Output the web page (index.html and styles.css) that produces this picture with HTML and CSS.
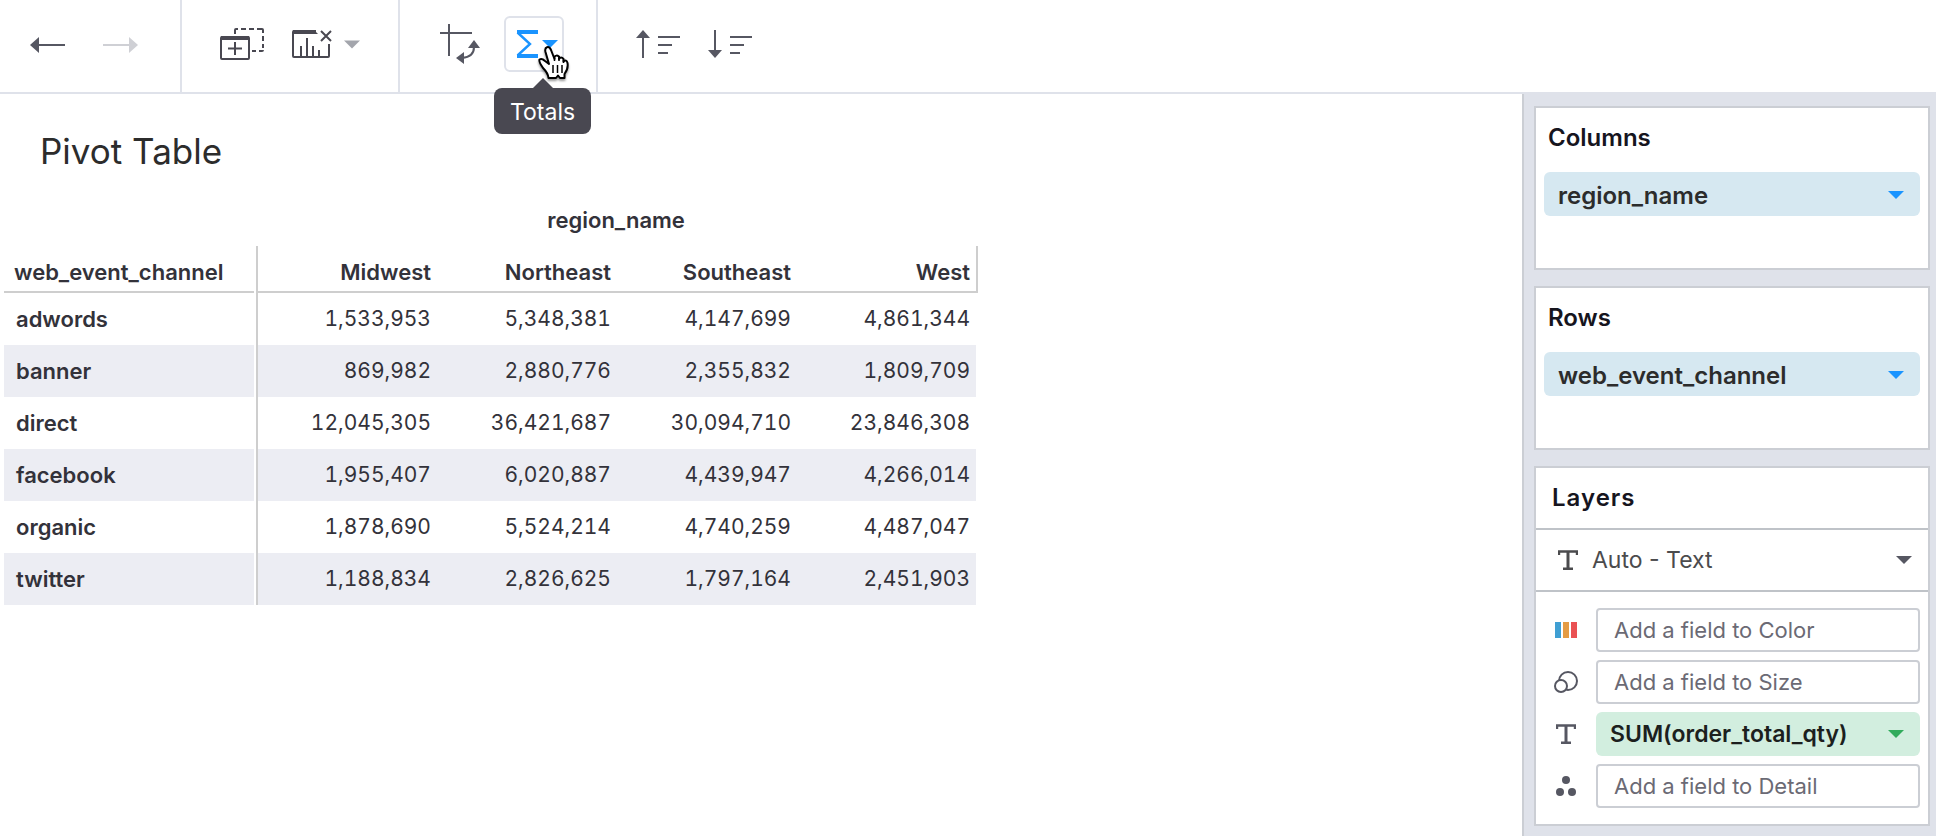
FILE: index.html
```
<!DOCTYPE html>
<html lang="en">
<head>
<meta charset="utf-8">
<title>Pivot Table</title>
<link rel="stylesheet" href="styles.css">
</head>
<body>
<svg class="defs" width="0" height="0" aria-hidden="true">
  <symbol id="caret" viewBox="0 0 16 8"><path d="M0 0H16L8 8Z" fill="currentColor"/></symbol>
  <symbol id="text-mark" viewBox="0 0 20 20"><path d="M1 5V1.500H19V5M5 18.800H15" fill="none" stroke="currentColor" stroke-width="2.400"/><path d="M10 1.500V18.500" stroke="currentColor" stroke-width="3"/></symbol>
</svg>
<div class="app">
  <header class="toolbar">
    <div class="group history">
      <button class="tool" aria-label="Undo"><svg width="36" height="18" viewBox="0 0 36 18"><path d="M0 9L9 1V17Z" fill="currentColor"/><path d="M8 9H35" stroke="currentColor" stroke-width="2"/></svg></button>
      <button class="tool faded" aria-label="Redo"><svg width="36" height="18" viewBox="0 0 36 18"><path d="M36 9L27 1V17Z" fill="currentColor"/><path d="M1 9H28" stroke="currentColor" stroke-width="2"/></svg></button>
    </div>
    <div class="group sheets">
      <button class="tool dark" aria-label="Duplicate"><svg width="44" height="32" viewBox="0 0 44 32" fill="none" stroke="currentColor" stroke-width="2"><rect x="1" y="9" width="28" height="22" rx="1"/><path d="M1 10H29" stroke-width="4"/><path d="M15 14V27M8 20.500H22"/><path d="M15 6V2Q15 1 16 1H18M21 1H26M29 1H34M37 1H42Q43 1 43 2V5M43 8V13M43 16V20M43 22Q43 23 42 23H39M36 23H32"/></svg></button>
      <button class="tool dark with-caret" aria-label="Clear sheet"><svg width="40" height="28" viewBox="0 0 40 28" fill="none" stroke="currentColor" stroke-width="2"><path d="M24 1H2Q1 1 1 2V26Q1 27 2 27H36Q37 27 37 26V14"/><path d="M1 0H22L26 4H1Z" fill="currentColor" stroke="none"/><path d="M9 27V16M15 27V8M21 27V16M27 27V20M29 1L39 11M39 1L29 11"/></svg><svg class="caret pale" width="16" height="9"><use href="#caret"/></svg></button>
    </div>
    <div class="group analysis">
      <button class="tool" aria-label="Swap rows and columns"><svg width="40" height="40" viewBox="0 0 40 40" fill="none" stroke="currentColor" stroke-width="2"><path d="M9 0V32M0 9H32M34 23Q34 33 22 34"/><path d="M34 16L40 24H28ZM16 34L24 28V40Z" fill="currentColor" stroke="none"/></svg></button>
      <div class="totals-wrap">
        <button class="totals" aria-label="Totals" aria-describedby="tip"><svg width="22" height="28" viewBox="0 0 22 28" fill="none" stroke="currentColor"><path d="M1 2H22M1 26H22" stroke-width="4"/><path d="M1.500 2.500L14 14L1.500 25.500" stroke-width="2.400"/></svg><svg class="caret" width="16" height="8"><use href="#caret"/></svg></button>
        <div class="tooltip" id="tip" role="tooltip">Totals</div>
        <svg class="pointer" width="32" height="36" viewBox="0 0 32 36" aria-hidden="true"><path d="M11 18L7.500 6Q6.500 2 9 1.200T13 4L16.500 13V11Q18 8.500 21 10.500V13Q23 10 25.500 13V15.500Q28.500 13 29.500 17Q30.500 23 26.500 28V32H22L20 29.500L18 32H10.500Q10 27 5 22Q.5 15.500 1.500 13.500Q4 12 7 15Z" fill="#fff" stroke="#000" stroke-width="2" stroke-linejoin="round"/><path d="M16.500 12V15M21 12V15M25.500 14V17M15 19V27M19.500 19V27M24 19V27" stroke="#000" stroke-width="1.500"/></svg>
      </div>
    </div>
    <div class="group sorting">
      <button class="tool" aria-label="Sort ascending"><svg width="44" height="28" viewBox="0 0 44 28" fill="none" stroke="currentColor" stroke-width="2"><path d="M7 7V28M22 7H44M22 15H36M22 23H32"/><path d="M7 0L14 8H0Z" fill="currentColor" stroke="none"/></svg></button>
      <button class="tool" aria-label="Sort descending"><svg width="44" height="28" viewBox="0 0 44 28" fill="none" stroke="currentColor" stroke-width="2"><path d="M7 0V21M22 7H44M22 15H36M22 23H32"/><path d="M7 28L14 20H0Z" fill="currentColor" stroke="none"/></svg></button>
    </div>
  </header>
  <div class="workspace">
    <main class="sheet">
      <h1 class="title">Pivot Table</h1>
      <table class="pivot">
        <colgroup><col class="col-name"><col class="col-gap"><col class="col-data" span="4"></colgroup>
        <thead>
          <tr class="dimension"><td colspan="2"></td><th colspan="4" scope="colgroup">region_name</th></tr>
          <tr class="heads"><th class="name" scope="col">web_event_channel</th><td class="gap"></td><th scope="col">Midwest</th><th scope="col">Northeast</th><th scope="col">Southeast</th><th class="last" scope="col">West</th></tr>
        </thead>
        <tbody>
          <tr><th class="name" scope="row">adwords</th><td class="gap"></td><td>1,533,953</td><td>5,348,381</td><td>4,147,699</td><td class="last">4,861,344</td></tr>
          <tr><th class="name" scope="row">banner</th><td class="gap"></td><td>869,982</td><td>2,880,776</td><td>2,355,832</td><td class="last">1,809,709</td></tr>
          <tr><th class="name" scope="row">direct</th><td class="gap"></td><td>12,045,305</td><td>36,421,687</td><td>30,094,710</td><td class="last">23,846,308</td></tr>
          <tr><th class="name" scope="row">facebook</th><td class="gap"></td><td>1,955,407</td><td>6,020,887</td><td>4,439,947</td><td class="last">4,266,014</td></tr>
          <tr><th class="name" scope="row">organic</th><td class="gap"></td><td>1,878,690</td><td>5,524,214</td><td>4,740,259</td><td class="last">4,487,047</td></tr>
          <tr><th class="name" scope="row">twitter</th><td class="gap"></td><td>1,188,834</td><td>2,826,625</td><td>1,797,164</td><td class="last">2,451,903</td></tr>
        </tbody>
      </table>
    </main>
    <aside class="panel">
      <section class="card shelf">
        <h2 class="heading">Columns</h2>
        <button class="pill blue">region_name<svg class="caret" width="16" height="8"><use href="#caret"/></svg></button>
      </section>
      <section class="card shelf">
        <h2 class="heading">Rows</h2>
        <button class="pill blue">web_event_channel<svg class="caret" width="16" height="8"><use href="#caret"/></svg></button>
      </section>
      <section class="card">
        <h2 class="heading layers">Layers</h2>
        <div class="mark">
          <svg width="20" height="20"><use href="#text-mark"/></svg>
          <select class="mark-type" aria-label="Mark type"><option>Auto - Text</option></select>
          <svg class="caret slate" width="16" height="8"><use href="#caret"/></svg>
        </div>
        <div class="fields">
          <label class="icon" for="color"><svg width="22" height="16" viewBox="0 0 22 16"><rect width="6" height="16" fill="#3f9fd3"/><rect x="8" width="6" height="16" fill="#e59c44"/><rect x="16" width="6" height="16" fill="#ea5153"/></svg></label>
          <input class="field" id="color" type="text" placeholder="Add a field to Color">
          <label class="icon" for="size"><svg width="24" height="22" viewBox="0 0 24 22" fill="none" stroke="currentColor" stroke-width="2"><circle cx="14" cy="10" r="9"/><circle cx="7" cy="15" r="6" fill="#fff"/></svg></label>
          <input class="field" id="size" type="text" placeholder="Add a field to Size">
          <span class="icon"><svg width="20" height="20"><use href="#text-mark"/></svg></span>
          <button class="pill green">SUM(order_total_qty)<svg class="caret" width="16" height="8"><use href="#caret"/></svg></button>
          <label class="icon" for="detail"><svg width="20" height="20" viewBox="0 0 20 20" fill="currentColor"><circle cx="10" cy="4" r="4"/><circle cx="4" cy="16" r="4"/><circle cx="16" cy="16" r="4"/></svg></label>
          <input class="field" id="detail" type="text" placeholder="Add a field to Detail">
        </div>
      </section>
    </aside>
  </div>
</div>
</body>
</html>
```
FILE: styles.css
```
* { box-sizing: border-box; }
body {
  margin: 0;
  background: #fff;
  color: #33323a;
  font-family: Inter, "Liberation Sans", sans-serif;
  font-size: 22px;
}
button, input, select { font: inherit; color: inherit; margin: 0; }
button { padding: 0; border: 0; background: none; cursor: pointer; }
svg { display: block; flex: none; }
.defs { position: absolute; }
.app { display: flex; flex-direction: column; min-height: 100vh; }

.toolbar { display: flex; height: 94px; border-bottom: 2px solid #dfe2ea; }
.group { display: flex; align-items: center; border-right: 2px solid #dfe2ea; }
.history { gap: 36px; padding: 0 42px 2px 30px; }
.sheets { gap: 28px; padding: 0 38px 4px; }
.analysis { gap: 24px; padding: 0 32px 4px 40px; }
.sorting { gap: 28px; padding: 0 38px 4px; border-right: 0; }
.tool { display: flex; align-items: center; color: #565762; }
.dark { color: #494851; }
.faded { color: #cfd0d5; }
.with-caret { gap: 12px; }
.pale { color: #a3a5ac; }
.totals-wrap { position: relative; }
.totals {
  display: flex;
  align-items: center;
  gap: 4px;
  height: 56px;
  padding: 0 4px 0 10px;
  border: 2px solid #dfe2ea;
  border-radius: 6px;
  color: #1a94ff;
}
.tooltip {
  position: absolute;
  top: 72px;
  left: -10px;
  padding: 2px 16px 0;
  border-radius: 8px;
  background: #494851;
  color: #fff;
  font-size: 23px;
  line-height: 44px;
  z-index: 1;
}
.tooltip::before {
  content: "";
  position: absolute;
  left: 50%;
  bottom: 100%;
  margin-left: -10px;
  border: 10px solid transparent;
  border-top-width: 0;
  border-bottom-color: #494851;
}
.pointer { position: absolute; left: 34px; top: 30px; z-index: 2; filter: drop-shadow(0 2px 1px rgba(0, 0, 0, .4)); }

.workspace { display: flex; flex: 1; }
.sheet { flex: 1; padding: 31px 4px 0; }
.title { margin: 0 0 19px; padding-left: 36px; color: #2c2c2c; font-size: 35px; font-weight: 400; line-height: 52px; }
.pivot { border-collapse: separate; border-spacing: 0; table-layout: fixed; width: 974px; font-variant-numeric: tabular-nums; }
.col-name { width: 250px; }
.col-gap { width: 4px; }
.col-data { width: 180px; }
.pivot th, .pivot td { height: 52px; padding: 0 7px 0 0; text-align: right; line-height: 28px; }
.pivot th { font-weight: 600; }
.pivot td { font-size: 21px; }
.pivot .dimension td, .pivot .dimension th { height: 50px; padding: 0 4px 2px 0; text-align: center; }
.pivot .heads th, .pivot .heads td { height: 47px; }
.pivot .heads th { padding-top: 6px; border-bottom: 2px solid #cecece; }
.pivot .heads .last { border-right: 2px solid #cecece; padding-right: 6px; }
.pivot .name { text-align: left; padding-left: 12px; }
.pivot .heads .name { padding-left: 10px; }
.pivot .gap { padding: 0; border-right: 2px solid #cecece; }
.pivot tbody tr:nth-child(even) > :not(.gap) { background: #ecedf3; }
.pivot tbody .last { border-right: 2px solid #fff; padding-right: 6px; }

.panel {
  display: flex;
  flex-direction: column;
  gap: 16px;
  width: 414px;
  padding: 12px 6px 10px 10px;
  border-left: 2px solid #cbced4;
  background: #dfe2ea;
}
.card { border: 2px solid #cbced4; background: #fff; }
.shelf { padding: 0 8px 52px; }
.heading { margin: 0; padding: 0 4px 4px; color: #16151e; font-size: 24px; font-weight: 600; line-height: 60px; }
.layers { padding: 0 16px; letter-spacing: 1px; }
.pill {
  display: flex;
  align-items: center;
  justify-content: space-between;
  width: 100%;
  height: 44px;
  padding: 2px 16px 0 14px;
  border-radius: 6px;
  font-size: 24px;
  font-weight: 600;
}
.blue { background: #d6e8f1; color: #2c2c2c; }
.blue .caret { color: #1a94ff; }
.green { padding-top: 0; background: #d2eedf; color: #1c1f1e; font-size: 23px; }
.green .caret { color: #31ab5c; }
.mark {
  display: flex;
  align-items: center;
  gap: 14px;
  padding: 0 16px 0 22px;
  border: solid #bfc3c8;
  border-width: 2px 0;
  color: #4b4b4d;
}
.mark-type { flex: 1; height: 60px; padding: 0; border: 0; background: none; appearance: none; font-size: 23px; }
.slate { color: #565762; }
.fields { display: grid; grid-template-columns: 44px 1fr; gap: 8px; padding: 16px 8px; }
.icon { display: flex; align-items: center; justify-content: center; width: 44px; color: #565762; }
.fields .icon + * { width: 100%; }
.field { height: 44px; min-width: 0; padding: 0 16px; border: 2px solid #cbced4; border-radius: 4px; background: #fff; }
.field::placeholder { color: #6b6a74; opacity: 1; }
```
